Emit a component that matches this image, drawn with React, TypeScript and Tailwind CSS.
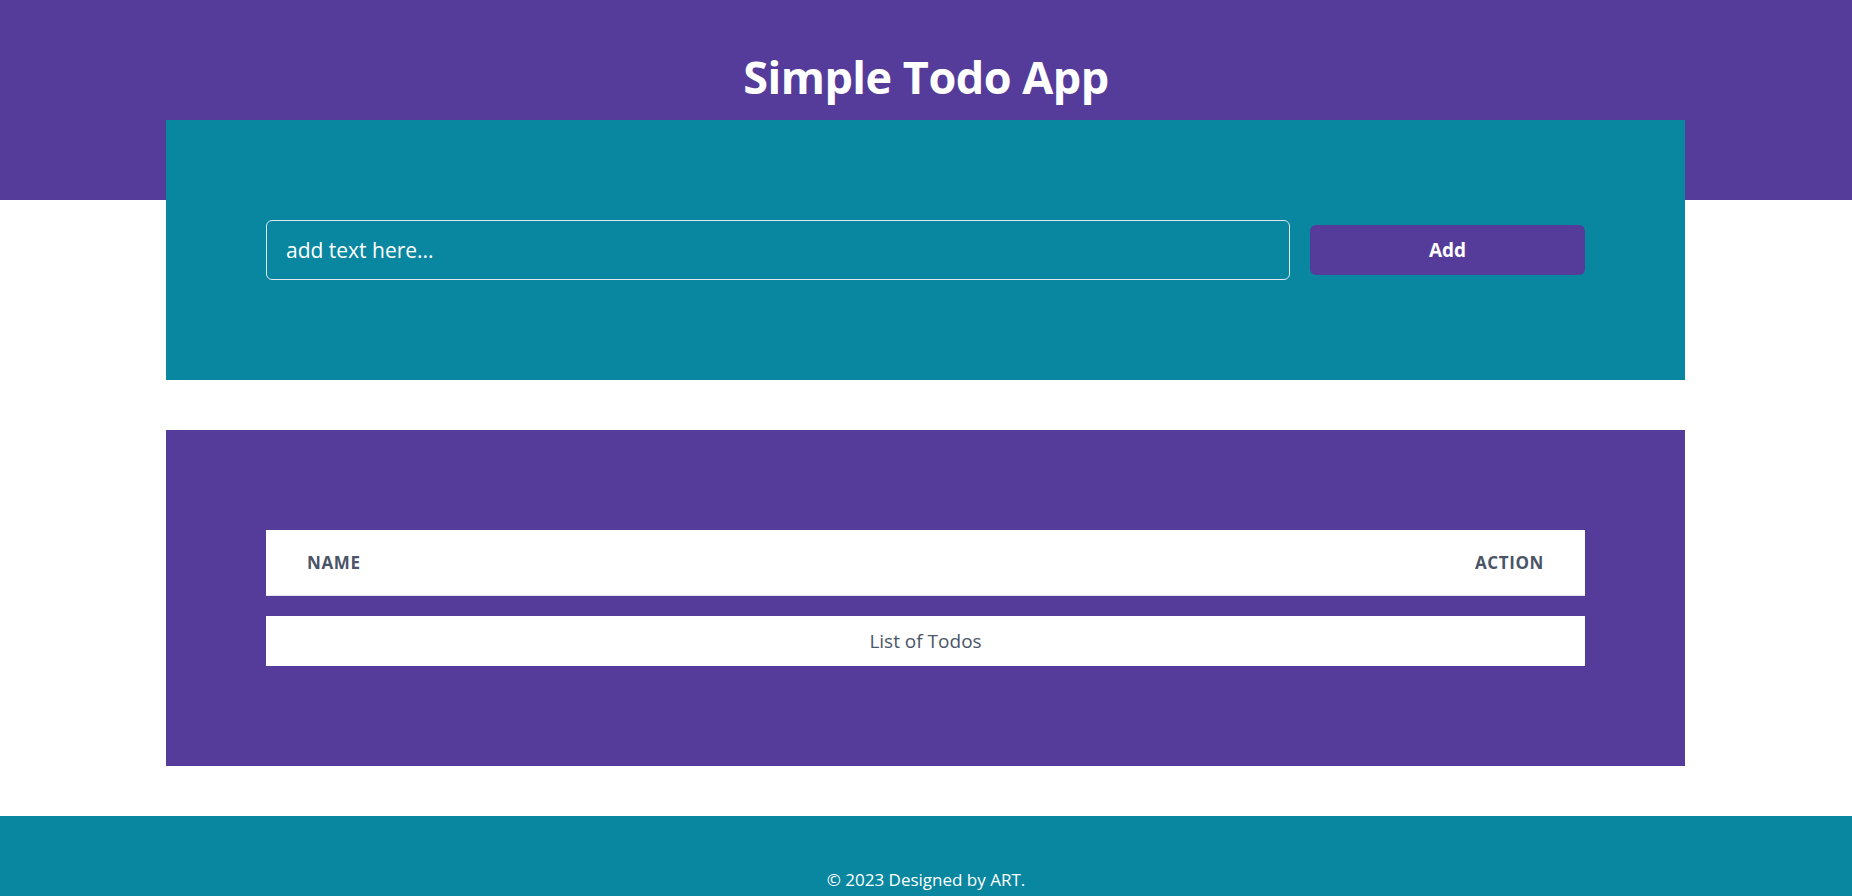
import React from "react";

export default function App() {
  return (
    <div className="min-h-screen bg-white" style={{ fontFamily: '"Open Sans", "Noto Sans", sans-serif' }}>
      <header className="h-[200px] bg-[#553c9a] flex justify-center pt-[47px]">
        <h1 className="text-[45px] leading-[60px] font-bold text-white tracking-[-0.5px]">Simple Todo App</h1>
      </header>
      <main className="-mt-[80px] flex flex-col gap-[50px] pb-[50px] pl-[166px]">
        <section className="w-[1519px] bg-[#0987a0] p-[100px] flex items-center gap-[20px]">
          <input
            type="text"
            placeholder="add text here..."
            className="w-[1024px] h-[60px] rounded-[6px] border border-[#e2e8f0] bg-transparent px-[19px] text-[21px] text-white placeholder:text-white outline-none"
          />
          <button className="w-[275px] h-[50px] rounded-[6px] bg-[#553c9a] text-white text-[19px] font-bold">
            Add
          </button>
        </section>
        <section className="w-[1519px] bg-[#553c9a] p-[100px] flex flex-col gap-[20px]">
          <div className="h-[66px] bg-white border-b border-[#e2e8f0] flex items-center justify-between px-[41px]">
            <span className="text-[17px] font-bold text-[#4a5568] tracking-[0.6px]">NAME</span>
            <span className="text-[17px] font-bold text-[#4a5568] tracking-[0.6px]">ACTION</span>
          </div>
          <div className="h-[50px] bg-white flex items-center justify-center">
            <span className="text-[19px] text-[#4a5568]">List of Todos</span>
          </div>
        </section>
      </main>
      <footer className="bg-[#0987a0] pt-[51px] pb-[40px] flex justify-center">
        <p className="text-[17px] text-white">© 2023 Designed by ART.</p>
      </footer>
    </div>
  );
}
